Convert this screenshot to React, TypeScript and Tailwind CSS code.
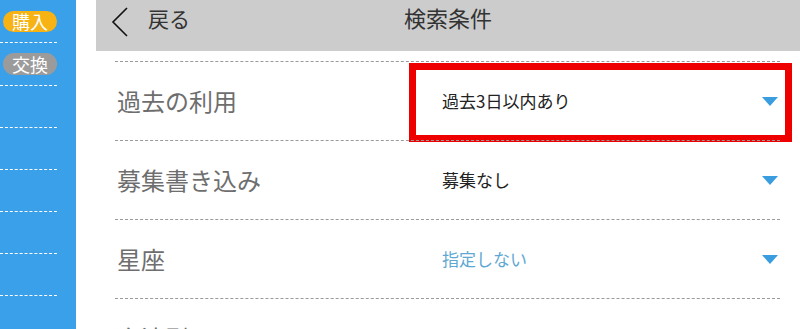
import React from "react";

const font = { fontFamily: '"Noto Sans CJK JP", "Noto Sans", sans-serif' };

function Caret() {
  return (
    <svg width="16" height="9" viewBox="0 0 16 9" className="block">
      <polygon points="0,0 16,0 8,9" fill="#3a9de0" />
    </svg>
  );
}

type Row = { label: string; value: string; valueClass: string; highlight?: boolean };

const rows: Row[] = [
  { label: "過去の利用", value: "過去3日以内あり", valueClass: "text-[#222]", highlight: true },
  { label: "募集書き込み", value: "募集なし", valueClass: "text-[#222]" },
  { label: "星座", value: "指定しない", valueClass: "text-[#5fa8d4]" },
  { label: "血液型", value: "AB型", valueClass: "text-[#222]" },
];

export default function App() {
  return (
    <div className="flex h-[329px] w-[800px] overflow-hidden bg-white" style={font}>
      <aside className="w-[76px] shrink-0 bg-[#3aa0ea]">
        <div className="flex h-[43px] w-[57px] items-center border-b border-dashed border-white pl-[3px]">
          <span className="flex h-[21px] w-[54px] items-center justify-center rounded-full bg-[#f7b214] text-[18px] leading-none text-white">
            購入
          </span>
        </div>
        <div className="flex h-[43px] w-[57px] items-center border-b border-dashed border-white pl-[3px]">
          <span className="flex h-[22px] w-[54px] items-center justify-center rounded-full bg-[#9b9b9b] text-[18px] leading-none text-white">
            交換
          </span>
        </div>
        {[0, 1, 2, 3, 4, 5].map((i) => (
          <div key={i} className="h-[42px] w-[57px] border-b border-dashed border-white" />
        ))}
      </aside>

      <main className="min-w-0 flex-1 pl-[20px]">
        <header className="grid h-[51px] grid-cols-[1fr_auto_1fr] items-start bg-[#cccccc]">
          <div className="flex items-start">
            <svg width="18" height="30" viewBox="0 0 18 30" className="ml-[15px] mt-[7px] block">
              <polyline points="16,1 2,15 16,29" fill="none" stroke="#111" strokeWidth="1.6" />
            </svg>
            <span className="ml-[19px] mt-[4px] text-[21px] leading-[28px] text-[#333]">戻る</span>
          </div>
          <div className="mt-[3px] text-[22px] leading-[28px] text-[#333]">検索条件</div>
          <div />
        </header>

        <div className="mr-[20px] ml-[19px] mt-[10px]">
          {rows.map((r) => (
            <div
              key={r.label}
              className="relative flex h-[79px] items-center border-t border-dashed border-[#9a9a9a]"
            >
              <div className="w-[302px] shrink-0 pl-[2px] text-[24px] text-[#6e6e6e]">{r.label}</div>
              <div className="flex flex-1 items-center justify-between pl-[25px] pr-[2px]">
                <span className={`text-[17px] ${r.valueClass}`}>{r.value}</span>
                <Caret />
              </div>
              {r.highlight && (
                <div className="pointer-events-none absolute left-[294px] top-[1px] h-[79px] w-[383px] border-[7px] border-[#ee0000]" />
              )}
            </div>
          ))}
        </div>
      </main>
    </div>
  );
}
